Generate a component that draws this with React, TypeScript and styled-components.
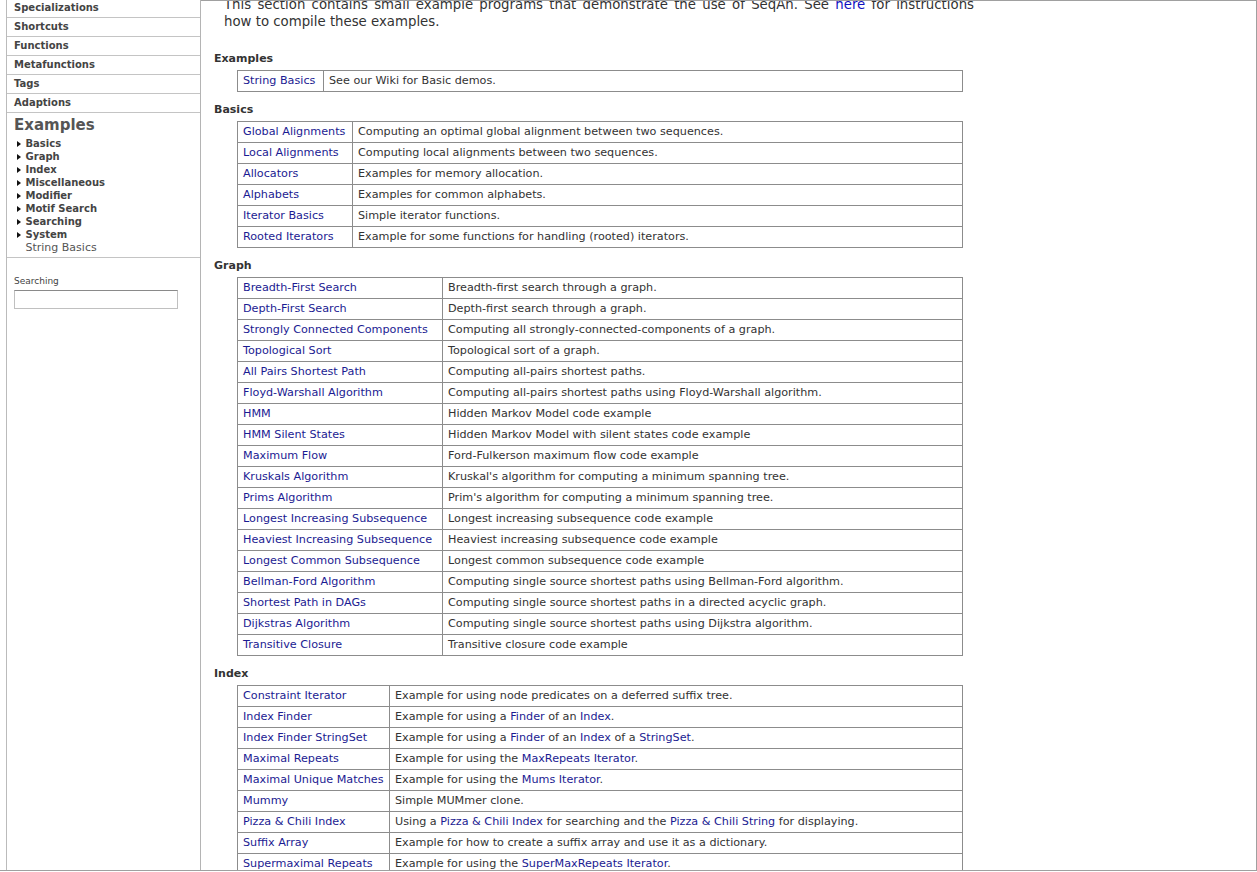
import React from "react";
import styled, { createGlobalStyle } from "styled-components";

const Global = createGlobalStyle`
  html, body { margin: 0; padding: 0; background: #fff; overflow: hidden; }
  body { font-family: "DejaVu Sans", Verdana, sans-serif; color: #333; }
`;

const Frame = styled.div`
  display: flex;
  width: 1257px;
  height: 871px;
  box-sizing: border-box;
  padding-left: 6px;
  border-bottom: 1px solid #a0a0a0;
  overflow: hidden;
`;

const Sidebar = styled.nav`
  flex: 0 0 195px;
  box-sizing: border-box;
  border-left: 1px solid #bbb;
  border-right: 1px solid #b4b4b4;
  overflow: hidden;
`;

const NavList = styled.ul`
  list-style: none;
  margin: -1px 0 0;
  padding: 0;
`;

const NavItem = styled.li`
  height: 18px;
  line-height: 18px;
  padding-left: 7px;
  border-bottom: 1px solid #c4c4c4;
  font-size: 10px;
  font-weight: bold;
  color: #444;
`;

const SideHeading = styled.div`
  padding: 3px 0 0 7px;
  line-height: 18px;
  font-size: 15px;
  font-weight: bold;
  color: #555;
  margin-bottom: 3px;
`;

const SubList = styled.ul`
  list-style: none;
  margin: 0;
  padding: 0 0 3px 10px;
  border-bottom: 1px solid #c4c4c4;
`;

const SubItem = styled.li<{ $leaf?: boolean }>`
  display: flex;
  align-items: center;
  height: 13px;
  line-height: 13px;
  font-size: ${(p) => (p.$leaf ? "11px" : "10px")};
  font-weight: ${(p) => (p.$leaf ? "normal" : "bold")};
  color: ${(p) => (p.$leaf ? "#555" : "#444")};
  padding-left: ${(p) => (p.$leaf ? "8.5px" : "0")};
`;

const Arrow = styled.span`
  width: 0;
  height: 0;
  margin-right: 4.5px;
  border-left: 4px solid #111;
  border-top: 3.5px solid transparent;
  border-bottom: 3.5px solid transparent;
`;

const SearchBox = styled.div`
  padding: 18px 0 0 7px;
`;

const SearchLabel = styled.div`
  font-size: 9px;
  line-height: 11px;
  color: #444;
  margin-bottom: 3px;
`;

const SearchInput = styled.input`
  display: block;
  width: 164px;
  height: 19px;
  box-sizing: border-box;
  margin: 0;
  border: 1px solid #c0c0c0;
  border-top-color: #8a8a8a;
  background: #fff;
  padding: 0 2px;
  font-size: 11px;
  outline: none;
`;

const Main = styled.main`
  flex: 1 1 auto;
  box-sizing: border-box;
  border-top: 1px solid #a0a0a0;
  border-right: 1px solid #a0a0a0;
  padding-left: 13px;
  overflow: hidden;
`;

const Intro = styled.div`
  width: 750px;
  margin: -5px 0 22px 10px;
  font-size: 13.3px;
  line-height: 17px;
  color: #333;
`;

const IntroLine = styled.div<{ $full?: boolean }>`
  text-align: ${(p) => (p.$full ? "justify" : "left")};
  text-align-last: ${(p) => (p.$full ? "justify" : "auto")};
  white-space: nowrap;
`;

const Link = styled.a`
  color: #1b1b92;
  text-decoration: none;
`;

const IntroLink = styled(Link)`
  color: #1010c0;
`;

const SectionHeading = styled.h3`
  margin: 11px 0 4px;
  font-size: 11px;
  line-height: 14px;
  font-weight: bold;
  color: #333;
`;

const Table = styled.table`
  margin-left: 23px;
  width: 726px;
  border-collapse: collapse;
  table-layout: fixed;
  font-size: 11.2px;
`;

const Cell = styled.td`
  height: 20px;
  line-height: 20px;
  padding: 0 6px 0 5px;
  border: 1px solid #8c8c8c;
  white-space: nowrap;
  overflow: hidden;
  color: #333;
`;

type Part = string | { link: string };
type Row = [string, Part[]];

const sections: { title: string; col: number; rows: Row[] }[] = [
  {
    title: "Examples",
    col: 86,
    rows: [["String Basics", ["See our Wiki for Basic demos."]]],
  },
  {
    title: "Basics",
    col: 115,
    rows: [
      ["Global Alignments", ["Computing an optimal global alignment between two sequences."]],
      ["Local Alignments", ["Computing local alignments between two sequences."]],
      ["Allocators", ["Examples for memory allocation."]],
      ["Alphabets", ["Examples for common alphabets."]],
      ["Iterator Basics", ["Simple iterator functions."]],
      ["Rooted Iterators", ["Example for some functions for handling (rooted) iterators."]],
    ],
  },
  {
    title: "Graph",
    col: 205,
    rows: [
      ["Breadth-First Search", ["Breadth-first search through a graph."]],
      ["Depth-First Search", ["Depth-first search through a graph."]],
      ["Strongly Connected Components", ["Computing all strongly-connected-components of a graph."]],
      ["Topological Sort", ["Topological sort of a graph."]],
      ["All Pairs Shortest Path", ["Computing all-pairs shortest paths."]],
      ["Floyd-Warshall Algorithm", ["Computing all-pairs shortest paths using Floyd-Warshall algorithm."]],
      ["HMM", ["Hidden Markov Model code example"]],
      ["HMM Silent States", ["Hidden Markov Model with silent states code example"]],
      ["Maximum Flow", ["Ford-Fulkerson maximum flow code example"]],
      ["Kruskals Algorithm", ["Kruskal's algorithm for computing a minimum spanning tree."]],
      ["Prims Algorithm", ["Prim's algorithm for computing a minimum spanning tree."]],
      ["Longest Increasing Subsequence", ["Longest increasing subsequence code example"]],
      ["Heaviest Increasing Subsequence", ["Heaviest increasing subsequence code example"]],
      ["Longest Common Subsequence", ["Longest common subsequence code example"]],
      ["Bellman-Ford Algorithm", ["Computing single source shortest paths using Bellman-Ford algorithm."]],
      ["Shortest Path in DAGs", ["Computing single source shortest paths in a directed acyclic graph."]],
      ["Dijkstras Algorithm", ["Computing single source shortest paths using Dijkstra algorithm."]],
      ["Transitive Closure", ["Transitive closure code example"]],
    ],
  },
  {
    title: "Index",
    col: 152,
    rows: [
      ["Constraint Iterator", ["Example for using node predicates on a deferred suffix tree."]],
      ["Index Finder", ["Example for using a ", { link: "Finder" }, " of an ", { link: "Index" }, "."]],
      [
        "Index Finder StringSet",
        ["Example for using a ", { link: "Finder" }, " of an ", { link: "Index" }, " of a ", { link: "StringSet" }, "."],
      ],
      ["Maximal Repeats", ["Example for using the ", { link: "MaxRepeats Iterator" }, "."]],
      ["Maximal Unique Matches", ["Example for using the ", { link: "Mums Iterator" }, "."]],
      ["Mummy", ["Simple MUMmer clone."]],
      [
        "Pizza & Chili Index",
        ["Using a ", { link: "Pizza & Chili Index" }, " for searching and the ", { link: "Pizza & Chili String" }, " for displaying."],
      ],
      ["Suffix Array", ["Example for how to create a suffix array and use it as a dictionary."]],
      ["Supermaximal Repeats", ["Example for using the ", { link: "SuperMaxRepeats Iterator" }, "."]],
    ],
  },
];

const navItems = ["Specializations", "Shortcuts", "Functions", "Metafunctions", "Tags", "Adaptions"];
const exampleGroups = ["Basics", "Graph", "Index", "Miscellaneous", "Modifier", "Motif Search", "Searching", "System"];

export default function App() {
  return (
    <>
      <Global />
      <Frame>
        <Sidebar>
          <NavList>
            {navItems.map((n) => (
              <NavItem key={n}>{n}</NavItem>
            ))}
          </NavList>
          <SideHeading>Examples</SideHeading>
          <SubList>
            {exampleGroups.map((g) => (
              <SubItem key={g}>
                <Arrow />
                {g}
              </SubItem>
            ))}
            <SubItem $leaf>String Basics</SubItem>
          </SubList>
          <SearchBox>
            <SearchLabel>Searching</SearchLabel>
            <SearchInput type="text" />
          </SearchBox>
        </Sidebar>
        <Main>
          <Intro>
            <IntroLine $full>
              This section contains small example programs that demonstrate the use of SeqAn. See{" "}
              <IntroLink href="#">here</IntroLink> for instructions
            </IntroLine>
            <IntroLine>how to compile these examples.</IntroLine>
          </Intro>
          {sections.map((s) => (
            <section key={s.title}>
              <SectionHeading>{s.title}</SectionHeading>
              <Table>
                <colgroup>
                  <col style={{ width: s.col }} />
                  <col />
                </colgroup>
                <tbody>
                  {s.rows.map(([name, parts]) => (
                    <tr key={name}>
                      <Cell>
                        <Link href="#">{name}</Link>
                      </Cell>
                      <Cell>
                        {parts.map((p, i) =>
                          typeof p === "string" ? (
                            <React.Fragment key={i}>{p}</React.Fragment>
                          ) : (
                            <Link key={i} href="#">
                              {p.link}
                            </Link>
                          )
                        )}
                      </Cell>
                    </tr>
                  ))}
                </tbody>
              </Table>
            </section>
          ))}
        </Main>
      </Frame>
    </>
  );
}
